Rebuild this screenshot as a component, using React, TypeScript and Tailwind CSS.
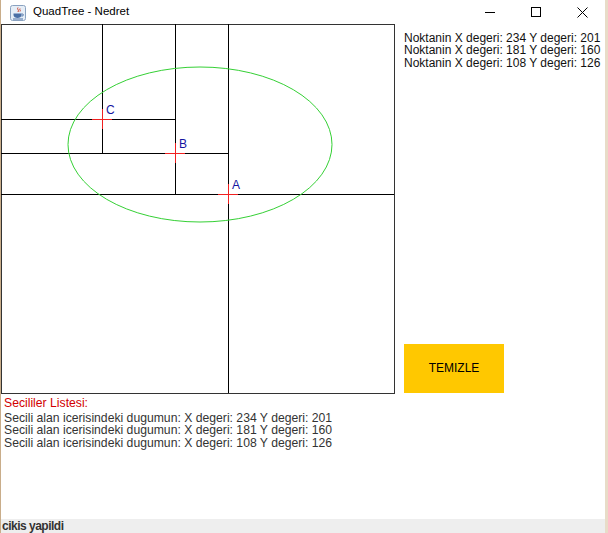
import React from "react";

const points = [
  { label: "A", x: 228, y: 170 },
  { label: "B", x: 175, y: 129 },
  { label: "C", x: 102, y: 95 },
];

const lines = [
  "X degeri: 234 Y degeri: 201",
  "X degeri: 181 Y degeri: 160",
  "X degeri: 108 Y degeri: 126",
];

function JavaIcon() {
  return (
    <svg width="16" height="16" viewBox="0 0 16 16">
      <rect x="0.5" y="0.5" width="15" height="15" rx="2" fill="#e6eef7" stroke="#8aa2c0" />
      <path d="M8 2.5c-1.5 1.5 1.5 2.5 0 4.5M10 3.5c-1 1 1 1.8 0 3" stroke="#d0402a" strokeWidth="1" fill="none" />
      <path d="M3.5 8.5h8v1.5c0 2-2 3-4 3s-4-1-4-3z" fill="#4a6fa5" />
      <path d="M11.5 9h1.2c.8 0 .8 2-.3 2h-1" stroke="#4a6fa5" fill="none" />
      <path d="M3 14h10" stroke="#4a6fa5" />
    </svg>
  );
}

function TitleBar() {
  return (
    <div className="flex h-[24px] shrink-0 items-center bg-white">
      <div className="ml-[9px] mt-[1px]">
        <JavaIcon />
      </div>
      <span className="ml-[7px] text-[11.5px] leading-none text-black">QuadTree - Nedret</span>
      <div className="ml-auto flex h-full items-center">
        <div className="flex h-full w-[46px] items-center justify-center">
          <div className="h-px w-[10px] bg-black" />
        </div>
        <div className="flex h-full w-[46px] items-center justify-center">
          <div className="h-[10px] w-[10px] border border-black" />
        </div>
        <div className="flex h-full w-[46px] items-center justify-center">
          <svg width="11" height="11" viewBox="0 0 11 11">
            <path d="M0.5 0.5l10 10M10.5 0.5l-10 10" stroke="#000" strokeWidth="1" />
          </svg>
        </div>
      </div>
    </div>
  );
}

function Canvas() {
  return (
    <svg width="396" height="371" className="block shrink-0">
      <rect x="1.5" y="0.5" width="393" height="369" fill="#fff" stroke="#333" />
      <g stroke="#000" strokeWidth="1">
        <line x1="102.5" y1="0" x2="102.5" y2="129" />
        <line x1="175.5" y1="0" x2="175.5" y2="170" />
        <line x1="228.5" y1="0" x2="228.5" y2="369" />
        <line x1="1" y1="95.5" x2="175" y2="95.5" />
        <line x1="1" y1="129.5" x2="228" y2="129.5" />
        <line x1="1" y1="170.5" x2="394" y2="170.5" />
      </g>
      <ellipse cx="200" cy="120.5" rx="132" ry="77.5" fill="none" stroke="#35d035" strokeWidth="1" />
      {points.map((p) => (
        <g key={p.label}>
          <line x1={p.x - 10} y1={p.y + 0.5} x2={p.x + 10} y2={p.y + 0.5} stroke="#f02020" />
          <line x1={p.x + 0.5} y1={p.y - 10} x2={p.x + 0.5} y2={p.y + 10} stroke="#f02020" />
          <text x={p.x + 4} y={p.y - 5} fontSize="12" fill="#1414a0" fontFamily='"Liberation Sans", Arial, sans-serif'>
            {p.label}
          </text>
        </g>
      ))}
    </svg>
  );
}

export default function App() {
  return (
    <div
      className="flex h-[533px] w-[608px] overflow-hidden bg-white text-[12px] leading-[12px]"
      style={{ fontFamily: '"Liberation Sans", Arial, sans-serif' }}
    >
      <div className="w-px shrink-0 bg-[#c9ad8a]" />
      <div className="flex min-w-0 flex-1 flex-col">
        <TitleBar />
        <div className="flex">
          <div className="-ml-px">
            <Canvas />
          </div>
          <div className="ml-[8px] flex h-[371px] flex-col pt-[8px] leading-[12.4px] text-[#111]">
            {lines.map((l) => (
              <div key={l} className="whitespace-nowrap">Noktanin {l}</div>
            ))}
            <button className="mb-[2px] mt-auto flex h-[49px] w-[100px] items-center justify-center bg-[#ffc800] text-[12px] text-black">
              TEMIZLE
            </button>
          </div>
        </div>
        <div className="pl-[3px] pt-[2px] text-[12.2px] leading-[12.5px] text-[#333]">
          <div className="text-[#d20000]">Secililer Listesi:</div>
          <div className="mt-[2px]">
            {lines.map((l) => (
              <div key={l} className="whitespace-nowrap">Secili alan icerisindeki dugumun: {l}</div>
            ))}
          </div>
        </div>
        <div className="mt-auto flex h-[14px] items-end bg-[#eeeeee] pl-[1px]">
          <span className="text-[12px] font-bold leading-[13px] tracking-[-0.5px] text-[#333]">cikis yapildi</span>
        </div>
      </div>
      <div className="w-[3px] shrink-0 bg-[#e8dcc8]" />
    </div>
  );
}
